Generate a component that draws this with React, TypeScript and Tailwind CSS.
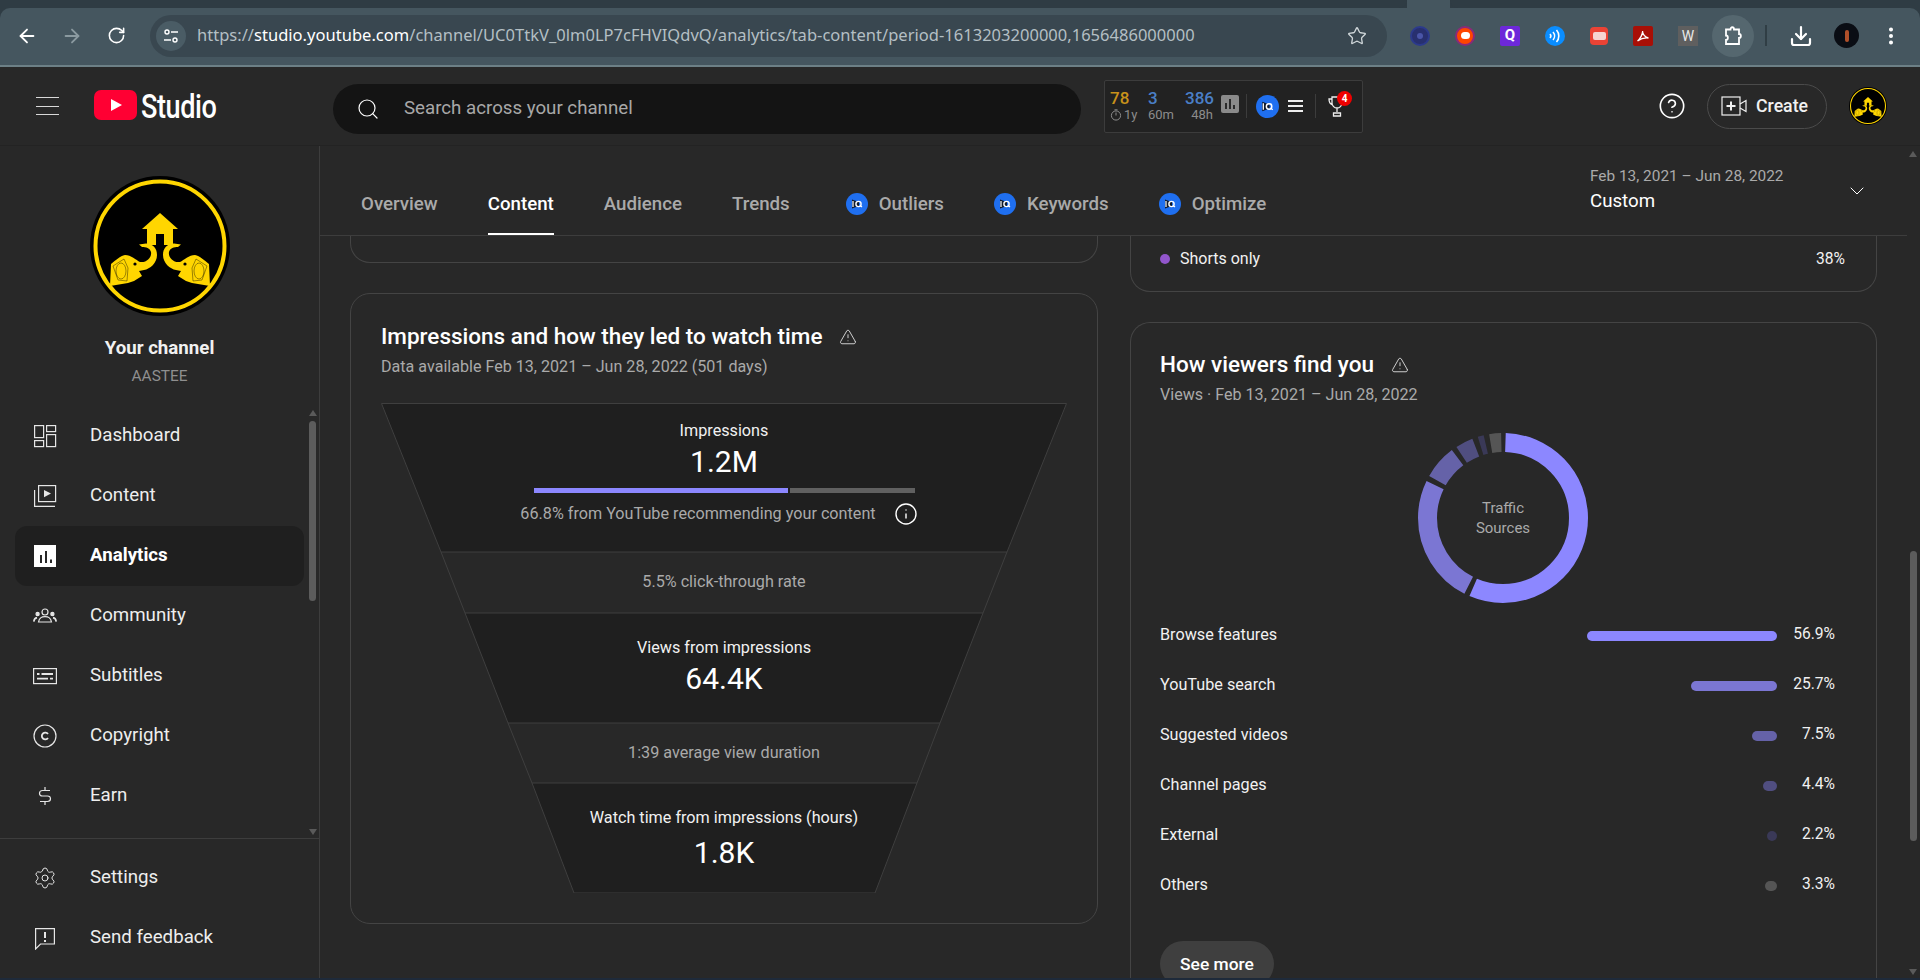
import { ArrowLeft, ArrowRight, RotateCw, Star, Download, EllipsisVertical, Search, CircleHelp, Info, TriangleAlert, ChevronDown, Settings } from 'lucide-react'

function ChannelLogo({ size, className }: { size: number; className?: string }) {
  const half = (
    <>
      <path
        d="M20 110 L21 88 C26 84 30 80 35 79 C41 79 46 84 50 86 C57 87 62 81 61 76 C60 72 56 71 52 71 L49 68.5 L56 67.5 C63 68 67 72 67 79 C67 87 60 93 54 94 L49 95 L52 100 L44 105 L38 107 Z"
        fill="#ffd600"
      />
      <path d="M23 90 L34 83 L38 92 L37 105 L28 104 Z" fill="none" stroke="#000" strokeWidth="0.4" />
      <ellipse cx="31" cy="95" rx="5" ry="8" fill="none" stroke="#000" strokeWidth="0.4" />
      <circle cx="45" cy="88" r="1.6" fill="#000" />
    </>
  )
  return (
    <svg width={size} height={size} viewBox="0 0 140 140" className={className}>
      <circle cx="70" cy="70" r="70" fill="#000" />
      <circle cx="70" cy="70" r="64.5" fill="none" stroke="#ffd600" strokeWidth="4" />
      <path d="M70 37 L88 53 L83 53 L83 69 L74 69 L74 58 L66 58 L66 69 L57 69 L57 53 L52 53 Z" fill="#ffd600" />
      {half}
      <g transform="translate(140,0) scale(-1,1)">{half}</g>
    </svg>
  )
}

function IqBadge({ size = 22 }: { size?: number }) {
  return (
    <svg width={size} height={size} viewBox="0 0 22 22" className="shrink-0">
      <circle cx="11" cy="11" r="11" fill="#1f6ff0" />
      <path d="M6 6.5 L13 9 L13 13 L6 15.5 Z" fill="#101a2c" />
      <circle cx="12.5" cy="11" r="2.6" fill="none" stroke="#fff" strokeWidth="1.4" />
      <path d="M7 8 V14" stroke="#fff" strokeWidth="1.2" />
      <path d="M14 12.5 L16 14" stroke="#fff" strokeWidth="1.2" />
    </svg>
  )
}

const navIcons: Record<string, React.ReactNode> = {
  Dashboard: (
    <g fill="none" stroke="#e6e6e6" strokeWidth="1.2">
      <rect x="1.6" y="1.6" width="9" height="12" />
      <rect x="13.6" y="1.6" width="9" height="6" />
      <rect x="1.6" y="16.6" width="9" height="6" />
      <rect x="13.6" y="10.6" width="9" height="12" />
    </g>
  ),
  Content: (
    <g fill="none" stroke="#e6e6e6" strokeWidth="1.2">
      <rect x="5.6" y="1.6" width="17" height="16" />
      <path d="M1.6 6 V22.4 H22" />
      <path d="M11 6 L18 9.6 L11 13.2 Z" fill="#e6e6e6" stroke="none" />
    </g>
  ),
  Analytics: (
    <g>
      <rect x="1" y="1" width="22" height="22" fill="#fff" />
      <path d="M7 11 H9 V19 H7 Z M12 7 H14 V19 H12 Z M17 15.5 H19 V19 H17 Z" fill="#282828" />
    </g>
  ),
  Community: (
    <g fill="none" stroke="#e6e6e6" strokeWidth="1.2">
      <circle cx="12" cy="8" r="3" />
      <path d="M5.5 18 C6.5 13 9 12.6 12 12.6 C15 12.6 17.5 13 18.5 18 H5.5 Z" />
      <circle cx="4.6" cy="10" r="1.6" fill="#e6e6e6" />
      <circle cx="19.4" cy="10" r="1.6" fill="#e6e6e6" />
      <path d="M0.8 17.6 C1 15 2 14 4 13.6 M23.2 17.6 C23 15 22 14 20 13.6" strokeWidth="1.6" />
    </g>
  ),
  Subtitles: (
    <g fill="none" stroke="#e6e6e6" strokeWidth="1.2">
      <rect x="0.6" y="4.6" width="22.8" height="15" />
      <path d="M4 10 H6.5 M8.5 10 H20 M4 14.6 H15 M17 14.6 H20" strokeWidth="1.8" />
    </g>
  ),
  Copyright: (
    <g fill="none" stroke="#e6e6e6" strokeWidth="1.2">
      <circle cx="12" cy="12" r="11" />
      <path d="M15 10 A3.4 3.4 0 1 0 15 14" strokeWidth="1.8" />
    </g>
  ),
  Earn: (
    <g fill="none" stroke="#e6e6e6" strokeWidth="1.2">
      <path d="M17 6.5 H9.5 C7.5 6.5 6.5 8 6.5 9.2 C6.5 10.8 7.5 12 9.5 12 H14.5 C16.5 12 17.5 13.2 17.5 14.8 C17.5 16 16.5 17.5 14.5 17.5 H7" />
      <path d="M12 3 V6.5 M12 17.5 V21" />
    </g>
  ),
  'Send feedback': (
    <g fill="none" stroke="#e6e6e6" strokeWidth="1.2">
      <path d="M2.6 2.6 H21.4 V18 H7.5 L2.6 23 Z" />
      <path d="M12 6 V12 M12 14 V16" strokeWidth="2" />
    </g>
  ),
}

function NavRow({ label, active }: { label: string; active?: boolean }) {
  return (
    <div className={`mx-[15px] flex h-[60px] w-[289px] items-center rounded-xl ${active ? 'bg-[#1f1f1f]' : ''}`}>
      <span className="ml-[18px] flex w-[24px] items-center justify-center">
        {label === 'Settings' ? (
          <Settings size={26} strokeWidth={1} className="text-[#e6e6e6]" />
        ) : (
          <svg width="24" height="24" viewBox="0 0 24 24">
            {navIcons[label]}
          </svg>
        )}
      </span>
      <span className={`-mt-[2px] ml-[33px] text-[18.7px] ${active ? 'font-bold text-white' : 'text-[#eeeeee]'}`}>{label}</span>
    </div>
  )
}

function Sidebar() {
  return (
    <aside className="flex w-[320px] shrink-0 flex-col border-r border-[#3d3d3d]">
      <div className="relative flex flex-1 flex-col items-center">
        <ChannelLogo size={140} className="mt-[30px]" />
        <div className="mt-[20px] text-[18.7px] leading-[24px] font-bold text-[#f1f1f1]">Your channel</div>
        <div className="mt-[6px] text-[15.4px] leading-[20px] text-[#8f8f8f]">AASTEE</div>
        <nav className="mt-[20px] self-start">
          {['Dashboard', 'Content', 'Analytics', 'Community', 'Subtitles', 'Copyright', 'Earn'].map((l) => (
            <NavRow key={l} label={l} active={l === 'Analytics'} />
          ))}
        </nav>
        {/* scrollbar */}
        <div className="absolute top-[264px] left-[309px] h-0 w-0 border-x-[4px] border-b-[6px] border-x-transparent border-b-[#5a5a5a]" />
        <div className="absolute top-[275px] left-[309px] h-[180px] w-[7px] rounded-full bg-[#5c5c5c]" />
        <div className="absolute top-[683px] left-[309px] h-0 w-0 border-x-[4px] border-t-[6px] border-x-transparent border-t-[#5a5a5a]" />
      </div>
      <div className="h-[140px] border-t border-[#3d3d3d] pt-[9px]">
        <NavRow label="Settings" />
        <NavRow label="Send feedback" />
      </div>
    </aside>
  )
}

function BrowserBar() {
  const exts = [
    <span key="a" className="flex h-[20px] w-[20px] items-center justify-center rounded-full border-2 border-[#2c3a8c] bg-[#28306f]">
      <span className="h-[6px] w-[6px] rounded-full bg-[#4a55a8]" />
    </span>,
    <span key="b" className="flex h-[20px] w-[20px] items-center justify-center rounded-full border-2 border-[#8a2a7a] bg-[#ff4500]">
      <span className="h-[7px] w-[9px] rounded-full bg-white" />
    </span>,
    <span key="c" className="flex h-[20px] w-[20px] items-center justify-center rounded-[2px] bg-[#6d28d9]">
      <span className="text-[15px] leading-none font-bold text-white">Q</span>
    </span>,
    <span key="d" className="flex h-[20px] w-[20px] items-center justify-center rounded-full bg-[#0a8dff]">
      <svg width="14" height="14" viewBox="0 0 14 14" fill="none" stroke="#fff" strokeWidth="1.6">
        <path d="M2 5 A3 3 0 0 1 2 9 M5 3 A6 6 0 0 1 5 11 M8.5 1 A9 9 0 0 1 8.5 13" />
      </svg>
    </span>,
    <span key="e" className="flex h-[18px] w-[18px] items-center justify-center rounded-[4px] bg-[#ea4335]">
      <span className="h-[8px] w-[13px] rounded-[2px] bg-[#f6d5d2]" />
    </span>,
    <span key="f" className="flex h-[20px] w-[20px] items-center justify-center rounded-[2px] bg-[#a80f06]">
      <svg width="14" height="14" viewBox="0 0 14 14" fill="none" stroke="#fff" strokeWidth="1.3">
        <path d="M1.5 12 C4 10 7 5 6.5 2 C6.5 5 9 8.5 12.5 9 C9 8.5 5 9.5 1.5 12 Z" />
      </svg>
    </span>,
    <span key="g" className="flex h-[20px] w-[20px] items-center justify-center bg-[#5f5f5f] text-[14px] leading-none text-[#e8e8e8]">W</span>,
  ]
  return (
    <div className="h-[67px] shrink-0 bg-[#2f3c44]">
      {/* strip gap above the active tab */}
      <div className="flex h-[8px]">
        <div className="h-full w-[1407px] rounded-br-xl bg-[#2f3c44]" />
        <div className="h-full w-[43px] bg-[#45565f]" />
        <div className="h-full flex-1 rounded-bl-xl bg-[#2f3c44]" />
      </div>
      <div className="flex h-[59px] items-center rounded-t-[10px] border-b-2 border-[#6d8086] bg-[#45565f] pb-[2px]">
        <div className="flex w-[150px] items-center pl-[16px]">
          <ArrowLeft size={22} strokeWidth={2} className="text-white" />
          <ArrowRight size={22} strokeWidth={2} className="ml-[23px] text-[#8b9aa0]" />
          <RotateCw size={19} strokeWidth={2} className="ml-[24px] text-white" />
        </div>
        <div className="flex h-[42px] w-[1237px] items-center rounded-full bg-[#394750] pr-[20px] pl-[6px]">
          <span className="flex h-[30px] w-[30px] items-center justify-center rounded-full bg-[#4a5c65]">
            <svg width="16" height="16" viewBox="0 0 16 16" fill="none" stroke="#fff" strokeWidth="1.4">
              <circle cx="4" cy="4" r="2" />
              <path d="M8 4 H15 M1 12 H8" />
              <circle cx="12" cy="12" r="2" />
            </svg>
          </span>
          <span className="ml-[11px] font-['Noto_Sans',sans-serif] text-[16.5px] tracking-[0.02px] whitespace-nowrap text-[#b4bfc4]">
            https://<span className="text-white">studio.youtube.com</span>/channel/UC0TtkV_0lm0LP7cFHVIQdvQ/analytics/tab-content/period-1613203200000,1656486000000
          </span>
          <Star size={20} strokeWidth={1.6} className="ml-auto text-[#cfd6d9]" />
        </div>
        <div className="ml-[23px] flex items-center gap-[25px]">{exts}</div>
        <span className="ml-[14px] flex h-[42px] w-[42px] items-center justify-center rounded-full bg-[#55676f]">
          <svg width="22" height="22" viewBox="0 0 22 22" fill="none" stroke="#fff" strokeWidth="1.8">
            <path d="M4 4.5 H8.5 C8.5 1.5 12 1.5 12 4.5 H17 V9 C19.5 9 19.5 13 17 13 V19 H4 V15 C6.5 15 6.5 10.5 4 10.5 Z" />
          </svg>
        </span>
        <span className="ml-[11px] h-[21px] w-[2px] bg-[#303e45]" />
        <Download size={24} strokeWidth={2.2} className="ml-[22px] text-white" />
        <span className="ml-[21px] flex h-[25px] w-[25px] items-center justify-center rounded-full bg-[#0a0d14]">
          <span className="h-[12px] w-[4px] rounded-full bg-[#b0502a]" />
        </span>
        <EllipsisVertical size={22} strokeWidth={2.4} className="ml-[21px] text-white" />
      </div>
    </div>
  )
}

function TopHeader() {
  return (
    <header className="flex h-[79px] shrink-0 items-center border-b border-[#232323]">
      <div className="ml-[36px] flex h-[18px] w-[23px] flex-col justify-between">
        <span className="h-[1px] bg-[#d8d8d8]" />
        <span className="h-[1px] bg-[#d8d8d8]" />
        <span className="h-[1px] bg-[#d8d8d8]" />
      </div>
      <svg width="43" height="30" viewBox="0 0 43 30" className="mb-[2px] ml-[35px]">
        <rect width="43" height="30" rx="7" fill="#ff0033" />
        <path d="M17 9 L28 15 L17 21 Z" fill="#fff" />
      </svg>
      <span className="ml-[4px] w-[74px] origin-left scale-x-[0.82] text-[33px] leading-none font-medium tracking-[-0.5px] text-white">Studio</span>
      <div className="mt-[5px] ml-[118px] flex h-[50px] w-[748px] items-center rounded-full bg-[#141414]">
        <Search size={24} strokeWidth={1.2} className="ml-[23px] text-white" />
        <span className="ml-[24px] text-[18.7px] text-[#a8a8a8]">Search across your channel</span>
      </div>
      <div className="ml-[23px] flex h-[53px] w-[259px] items-center rounded-[2px] border border-[#3c3c3c] bg-[#222222]">
        <div className="ml-[5px] w-[28px]">
          <div className="text-[17px] leading-[18px] font-medium text-[#c8921a]">78</div>
          <div className="flex items-center text-[13px] leading-[16px] whitespace-nowrap text-[#8c8c8c]">
            <svg width="12" height="12" viewBox="0 0 12 12" fill="none" stroke="#8c8c8c" className="mr-[2px]">
              <circle cx="6" cy="6.5" r="4.6" />
              <path d="M6 6.5 V3.5 M4.5 0.8 H7.5" />
            </svg>
            1y
          </div>
        </div>
        <div className="ml-[10px] w-[26px]">
          <div className="text-[17px] leading-[18px] font-medium text-[#4a7fc7]">3</div>
          <div className="text-[13px] leading-[16px] text-[#8c8c8c]">60m</div>
        </div>
        <div className="ml-[11px] w-[28px] text-right">
          <div className="text-[17px] leading-[18px] font-medium text-[#4a7fc7]">386</div>
          <div className="text-[13px] leading-[16px] text-[#8c8c8c]">48h</div>
        </div>
        <span className="mb-[4px] ml-[8px] flex h-[18px] w-[18px] items-end justify-center gap-[2px] rounded-[2px] bg-[#8a8a8a] pb-[4px]">
          <span className="h-[6px] w-[2px] bg-[#2a2a2a]" />
          <span className="h-[10px] w-[2px] bg-[#2a2a2a]" />
          <span className="h-[4px] w-[2px] bg-[#2a2a2a]" />
        </span>
        <span className="ml-[7px] h-[24px] w-[1px] bg-[#3c3c3c]" />
        <span className="ml-[9px]"><IqBadge size={23} /></span>
        <span className="ml-[9px] flex h-[12px] w-[15px] flex-col justify-between">
          <span className="h-[2px] bg-[#eeeeee]" />
          <span className="h-[2px] bg-[#eeeeee]" />
          <span className="h-[2px] bg-[#eeeeee]" />
        </span>
        <span className="ml-[12px] h-[24px] w-[1px] bg-[#3c3c3c]" />
        <span className="relative ml-[12px] flex items-center">
          <svg width="18" height="24" viewBox="0 0 18 24" fill="none" stroke="#eeeeee" strokeWidth="1.3">
            <path d="M4 3 H14 V9 C14 12 11.5 14 9 14 C6.5 14 4 12 4 9 Z M4 5 H1 C1 8 2 10 4.5 11 M9 14 V18 M5.5 22 V19 H12.5 V22 Z" />
          </svg>
          <span className="absolute -top-[3px] left-[9px] flex h-[15px] w-[15px] items-center justify-center rounded-full bg-[#ee0000] text-[10px] font-bold text-white">4</span>
        </span>
      </div>
      <CircleHelp size={28} strokeWidth={1.4} className="ml-[295px] text-white" />
      <div className="ml-[21px] flex h-[45px] w-[120px] items-center rounded-full border border-[#4b4b4b]">
        <svg width="26" height="24" viewBox="0 0 26 24" fill="none" stroke="#f1f1f1" strokeWidth="1.2" className="ml-[13px]">
          <rect x="1" y="3" width="18" height="18" />
          <path d="M19 10 L25 6.5 V17.5 L19 14" />
          <path d="M10 7.5 V16.5 M5.5 12 H14.5" strokeWidth="2" />
        </svg>
        <span className="ml-[9px] text-[17.7px] font-medium text-[#f1f1f1]">Create</span>
      </div>
      <ChannelLogo size={38} className="ml-[22px]" />
    </header>
  )
}

function TabBar() {
  const tabs = ['Overview', 'Content', 'Audience', 'Trends']
  const iqTabs = ['Outliers', 'Keywords', 'Optimize']
  return (
    <div className="mr-[13px] flex h-[90px] shrink-0 border-b border-[#3d3d3d]">
      <div className="ml-[41px] flex gap-[50px]">
        {tabs.map((t) => (
          <div
            key={t}
            className={`mt-[29px] flex items-center border-b-2 text-[18.7px] font-medium ${t === 'Content' ? 'border-white text-white' : 'border-transparent text-[#aaaaaa]'}`}
          >
            {t}
          </div>
        ))}
        {iqTabs.map((t, i) => (
          <div key={t} className={`mt-[29px] flex items-center gap-[11px] border-b-2 border-transparent text-[18.7px] font-medium text-[#aaaaaa] ${i === 0 ? 'ml-[6px]' : ''}`}>
            <IqBadge />
            {t}
          </div>
        ))}
      </div>
      <div className="ml-auto flex w-[317px] items-center justify-between pr-[38px]">
        <div className="pb-[2px]">
          <div className="text-[15.4px] leading-[20px] text-[#aaaaaa]">Feb 13, 2021 – Jun 28, 2022</div>
          <div className="mt-[3px] text-[18.7px] leading-[24px] text-white">Custom</div>
        </div>
        <ChevronDown size={24} strokeWidth={1} className="text-white" />
      </div>
    </div>
  )
}

function Funnel() {
  const line = '#3f3f3f'
  return (
    <div className="relative h-[490px] text-center">
      <svg width="686" height="490" viewBox="0 0 686 490" className="absolute inset-0">
        <g fill="#1f1f1f" stroke={line}>
          <path d="M0.5 0.5 H685.5 L626 149 H60 Z" />
          <path d="M84 210 H602 L559 320 H127 Z" />
          <path d="M151 380 H536 L494 490 H193 Z" />
        </g>
        <path d="M60 149 L84 210 M626 149 L602 210 M127 320 L151 380 M559 320 L536 380" stroke={line} fill="none" />
      </svg>
      <div className="relative">
        <div className="flex h-[149px] flex-col items-center pt-[17px]">
          <div className="text-[16.2px] leading-[22px] text-[#f1f1f1]">Impressions</div>
          <div className="mt-[2px] text-[30px] leading-[36px] text-white">1.2M</div>
          <div className="mt-[8px] flex h-[5px] w-[381px] gap-[2px]">
            <span className="w-[254px] bg-[#8c87ff]" />
            <span className="flex-1 bg-[#606060]" />
          </div>
          <div className="mt-[9px] flex items-center pr-[10px]">
            <span className="text-[16.2px] leading-[22px] text-[#aaaaaa]">66.8% from YouTube recommending your content</span>
            <Info size={24} strokeWidth={1.4} className="ml-[18px] text-white" />
          </div>
        </div>
        <div className="flex h-[61px] items-center justify-center text-[16.2px] text-[#aaaaaa]">5.5% click-through rate</div>
        <div className="flex h-[110px] flex-col items-center pt-[24px]">
          <div className="text-[16.2px] leading-[22px] text-[#f1f1f1]">Views from impressions</div>
          <div className="mt-[2px] text-[30px] leading-[36px] text-white">64.4K</div>
        </div>
        <div className="flex h-[60px] items-center justify-center pt-[1px] text-[16.2px] text-[#aaaaaa]">1:39 average view duration</div>
        <div className="flex h-[110px] flex-col items-center pt-[24px]">
          <div className="text-[16.2px] leading-[22px] text-[#f1f1f1]">Watch time from impressions (hours)</div>
          <div className="mt-[6px] text-[30px] leading-[36px] text-white">1.8K</div>
        </div>
      </div>
    </div>
  )
}

const sources = [
  { label: 'Browse features', pct: 56.9, width: 190, color: '#8c87ff' },
  { label: 'YouTube search', pct: 25.7, width: 86, color: '#7b76d3' },
  { label: 'Suggested videos', pct: 7.5, width: 25, color: '#6562a8' },
  { label: 'Channel pages', pct: 4.4, width: 14, color: '#504e80' },
  { label: 'External', pct: 2.2, width: 10, color: '#3a3957' },
  { label: 'Others', pct: 3.3, width: 12, color: '#555555' },
]

function Donut() {
  const r = 75.5
  const circ = 2 * Math.PI * r
  const gap = 5
  let offset = 0
  return (
    <div className="relative ml-[258px] h-[170px] w-[170px]">
      <svg width="170" height="170" viewBox="0 0 170 170" className="-rotate-90">
        {sources.map((s) => {
          const len = (s.pct / 100) * circ
          const el = (
            <circle
              key={s.label}
              cx="85"
              cy="85"
              r={r}
              fill="none"
              stroke={s.color}
              strokeWidth="19"
              strokeDasharray={`${Math.max(len - gap, 1)} ${circ}`}
              strokeDashoffset={-offset - 2.5}
            />
          )
          offset += len
          return el
        })}
      </svg>
      <div className="absolute inset-0 flex flex-col items-center justify-center text-[15px] leading-[20.5px] text-[#aaaaaa]">
        <span>Traffic</span>
        <span>Sources</span>
      </div>
    </div>
  )
}

function CardTitle({ title, sub }: { title: string; sub: string }) {
  return (
    <>
      <div className="flex h-[28px] items-center">
        <h2 className="-mt-[1px] text-[22.5px] font-medium text-white">{title}</h2>
        <TriangleAlert size={18} strokeWidth={1.2} className="ml-[17px] text-[#e0e0e0]" />
      </div>
      <div className="mt-[6px] text-[16.1px] leading-[20px] text-[#aaaaaa]">{sub}</div>
    </>
  )
}

export default function App() {
  return (
    <div className="flex h-[980px] w-[1920px] flex-col overflow-hidden bg-[#282828] font-['Roboto',sans-serif]">
      <BrowserBar />
      <TopHeader />
      <div className="flex h-[832px] shrink-0">
        <Sidebar />
        <main className="relative flex min-w-0 flex-1 flex-col">
          <TabBar />
          <div className="flex min-h-0 flex-1 items-start gap-[32px] overflow-hidden pl-[30px]">
            <div className="flex w-[748px] shrink-0 flex-col gap-[30px]">
              <div className="h-[27px] shrink-0 rounded-b-[20px] border-x border-b border-[#444444]" />
              <section className="rounded-[20px] border border-[#444444] px-[30px] pt-[29px] pb-[30px]">
                <CardTitle title="Impressions and how they led to watch time" sub="Data available Feb 13, 2021 – Jun 28, 2022 (501 days)" />
                <div className="mt-[26px]">
                  <Funnel />
                </div>
              </section>
            </div>
            <div className="flex w-[747px] shrink-0 flex-col gap-[30px]">
              <div className="flex h-[56px] shrink-0 items-start rounded-b-[20px] border-x border-b border-[#444444] pt-[13px] pr-[31px] pl-[29px] text-[16px] leading-[20px] text-[#f1f1f1]">
                <span className="mt-[5px] h-[10px] w-[10px] rounded-full bg-[#9256cc]" />
                <span className="ml-[10px]">Shorts only</span>
                <span className="ml-auto text-[15.6px]">38%</span>
              </div>
              <section className="shrink-0 rounded-t-[20px] border-x border-t border-[#444444] pt-[28px] pl-[29px]">
                <CardTitle title="How viewers find you" sub="Views · Feb 13, 2021 – Jun 28, 2022" />
                <div className="mt-[28px]">
                  <Donut />
                </div>
                <div className="mt-[8px]">
                  {sources.map((s) => (
                    <div key={s.label} className="flex h-[50px] items-center text-[16.2px] text-[#f1f1f1]">
                      <span className="-mt-[2px] flex-1">{s.label}</span>
                      <span className="h-[10px] rounded-full" style={{ width: s.width, backgroundColor: s.color }} />
                      <span className="mr-[41px] -mt-[2px] w-[58px] text-right text-[15.6px]">{s.pct}%</span>
                    </div>
                  ))}
                </div>
                <div className="mt-[30px] flex h-[46px] w-[114px] items-center justify-center rounded-full bg-[#3f3f3f] text-[17.4px] font-medium text-white">See more</div>
              </section>
            </div>
          </div>
          {/* page scrollbar */}
          <div className="absolute top-[5px] right-[3px] h-0 w-0 border-x-[4px] border-b-[6px] border-x-transparent border-b-[#5a5a5a]" />
          <div className="absolute top-[405px] right-[3px] h-[290px] w-[7px] rounded-full bg-[#5c5c5c]" />
          <div className="absolute right-[3px] bottom-[3px] h-0 w-0 border-x-[4px] border-t-[6px] border-x-transparent border-t-[#5a5a5a]" />
        </main>
      </div>
      <div className="h-[2px] shrink-0 bg-[#1e2a3a]" />
    </div>
  )
}
